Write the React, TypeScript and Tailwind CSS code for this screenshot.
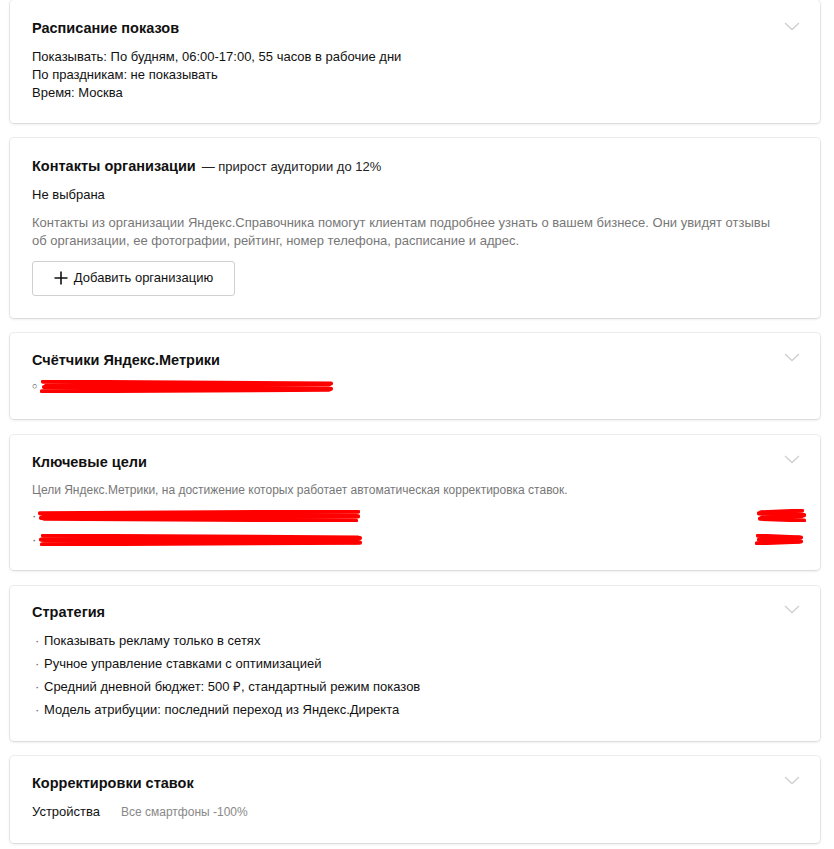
import React from "react";

const Chevron = () => (
  <svg width="16" height="9" viewBox="0 0 16 9" className="mt-[-4px] shrink-0">
    <polyline points="1,1 8,7.5 15,1" fill="none" stroke="#cfcfcf" strokeWidth="1.3" />
  </svg>
);

const Card = ({ children, className = "" }: { children: React.ReactNode; className?: string }) => (
  <div
    className={
      "relative bg-white rounded-[4px] shadow-[0_0_0_1px_rgba(0,0,0,0.06),0_1px_3px_rgba(0,0,0,0.12)] pl-[22px] pr-[20px] " +
      className
    }
  >
    {children}
  </div>
);

const Header = ({ title, chevron = true, extra }: { title: string; chevron?: boolean; extra?: React.ReactNode }) => (
  <div className="flex items-center justify-between">
    <div className="flex items-baseline">
      <span className="text-[14.5px] leading-5 font-bold text-[#111]">{title}</span>
      {extra}
    </div>
    {chevron && <Chevron />}
  </div>
);

const Scribble = ({ w, h, seed = 0 }: { w: number; h: number; seed?: number }) => {
  const lines: string[] = [];
  const n = 4;
  for (let i = 0; i < n; i++) {
    const base = 2.5 + (i * (h - 5)) / (n - 1);
    const y1 = base + ((i + seed) % 2 === 0 ? 0.8 : -0.8);
    const y2 = base + ((i + seed) % 2 === 0 ? -0.8 : 1);
    lines.push(`M ${2 + ((i * 3 + seed) % 5)} ${y1} L ${w - 2 - ((i * 2 + seed) % 4)} ${y2}`);
  }
  return (
    <svg width={w} height={h} viewBox={`0 0 ${w} ${h}`} className="shrink-0">
      {lines.map((d, i) => (
        <path key={i} d={d} stroke="#ff0000" strokeWidth="4.2" strokeLinecap="round" fill="none" />
      ))}
    </svg>
  );
};

export default function App() {
  return (
    <div
      className="bg-white min-h-[849px] pl-[10px] pr-[14px] flex flex-col gap-[15px] text-[13px] text-[#111]"
      style={{ fontFamily: "'Liberation Sans', Arial, sans-serif" }}
    >
      {/* Расписание */}
      <Card className="pt-[18px] pb-[21px]">
        <Header title="Расписание показов" />
        <div className="mt-[10px] leading-[18px]">
          <div>Показывать: По будням, 06:00-17:00, 55 часов в рабочие дни</div>
          <div>По праздникам: не показывать</div>
          <div>Время: Москва</div>
        </div>
      </Card>

      {/* Контакты */}
      <Card className="pt-[18px] pb-[22px]">
        <Header
          title="Контакты организации"
          chevron={false}
          extra={<span className="ml-[6px] text-[13px] text-[#222]">— прирост аудитории до 12%</span>}
        />
        <div className="mt-[9px] leading-[18px]">Не выбрана</div>
        <div className="mt-[10px] leading-[18px] text-[#777] max-w-[756px]">
          Контакты из организации Яндекс.Справочника помогут клиентам подробнее узнать о вашем бизнесе. Они увидят отзывы
          об организации, ее фотографии, рейтинг, номер телефона, расписание и адрес.
        </div>
        <button className="mt-[11px] h-[35px] w-[203px] flex items-center justify-center gap-[6px] rounded-[3px] border border-[#d0d0d0] bg-white text-[13px] text-[#111]">
          <svg width="14" height="14" viewBox="0 0 14 14">
            <path d="M7 0.5 V13.5 M0.5 7 H13.5" stroke="#111" strokeWidth="1.6" />
          </svg>
          <span>Добавить организацию</span>
        </button>
      </Card>

      {/* Метрика */}
      <Card className="pt-[17px] pb-[23px]">
        <Header title="Счётчики Яндекс.Метрики" />
        <div className="mt-[8px] h-[18px] flex items-center">
          <span className="w-[8px] text-[9px] text-[#333] leading-none">○</span>
          <Scribble w={294} h={13} seed={1} />
        </div>
      </Card>

      {/* Ключевые цели */}
      <Card className="pt-[17px] pb-[18px] mt-[1px]">
        <Header title="Ключевые цели" />
        <div className="mt-[10px] text-[12px] leading-4 text-[#777]">
          Цели Яндекс.Метрики, на достижение которых работает автоматическая корректировка ставок.
        </div>
        <div className="mt-[6px]">
          <div className="h-[24px] flex items-center">
            <span className="w-[6px] text-[#555]">·</span>
            <Scribble w={322} h={12} seed={0} />
            <div className="ml-auto mr-[-6px]">
              <Scribble w={49} h={13} seed={2} />
            </div>
          </div>
          <div className="h-[24px] flex items-center">
            <span className="w-[6px] text-[#555]">·</span>
            <Scribble w={325} h={12} seed={3} />
            <div className="ml-auto mr-[-4px]">
              <Scribble w={49} h={11} seed={1} />
            </div>
          </div>
        </div>
      </Card>

      {/* Стратегия */}
      <Card className="pt-[16px] pb-[20px] mt-[1px]">
        <Header title="Стратегия" />
        <ul className="mt-[7px] leading-[23px]">
          {[
            "Показывать рекламу только в сетях",
            "Ручное управление ставками с оптимизацией",
            "Средний дневной бюджет: 500 ₽, стандартный режим показов",
            "Модель атрибуции: последний переход из Яндекс.Директа",
          ].map((t) => (
            <li key={t} className="flex">
              <span className="w-[12px] pl-[3px] text-[#666]">·</span>
              <span>{t}</span>
            </li>
          ))}
        </ul>
      </Card>

      {/* Корректировки */}
      <Card className="pt-[17px] pb-[22px]">
        <Header title="Корректировки ставок" />
        <div className="mt-[10px] leading-[18px] flex items-baseline">
          <span className="w-[89px]">Устройства</span>
          <span className="text-[12px] text-[#888]">Все смартфоны -100%</span>
        </div>
      </Card>
    </div>
  );
}
